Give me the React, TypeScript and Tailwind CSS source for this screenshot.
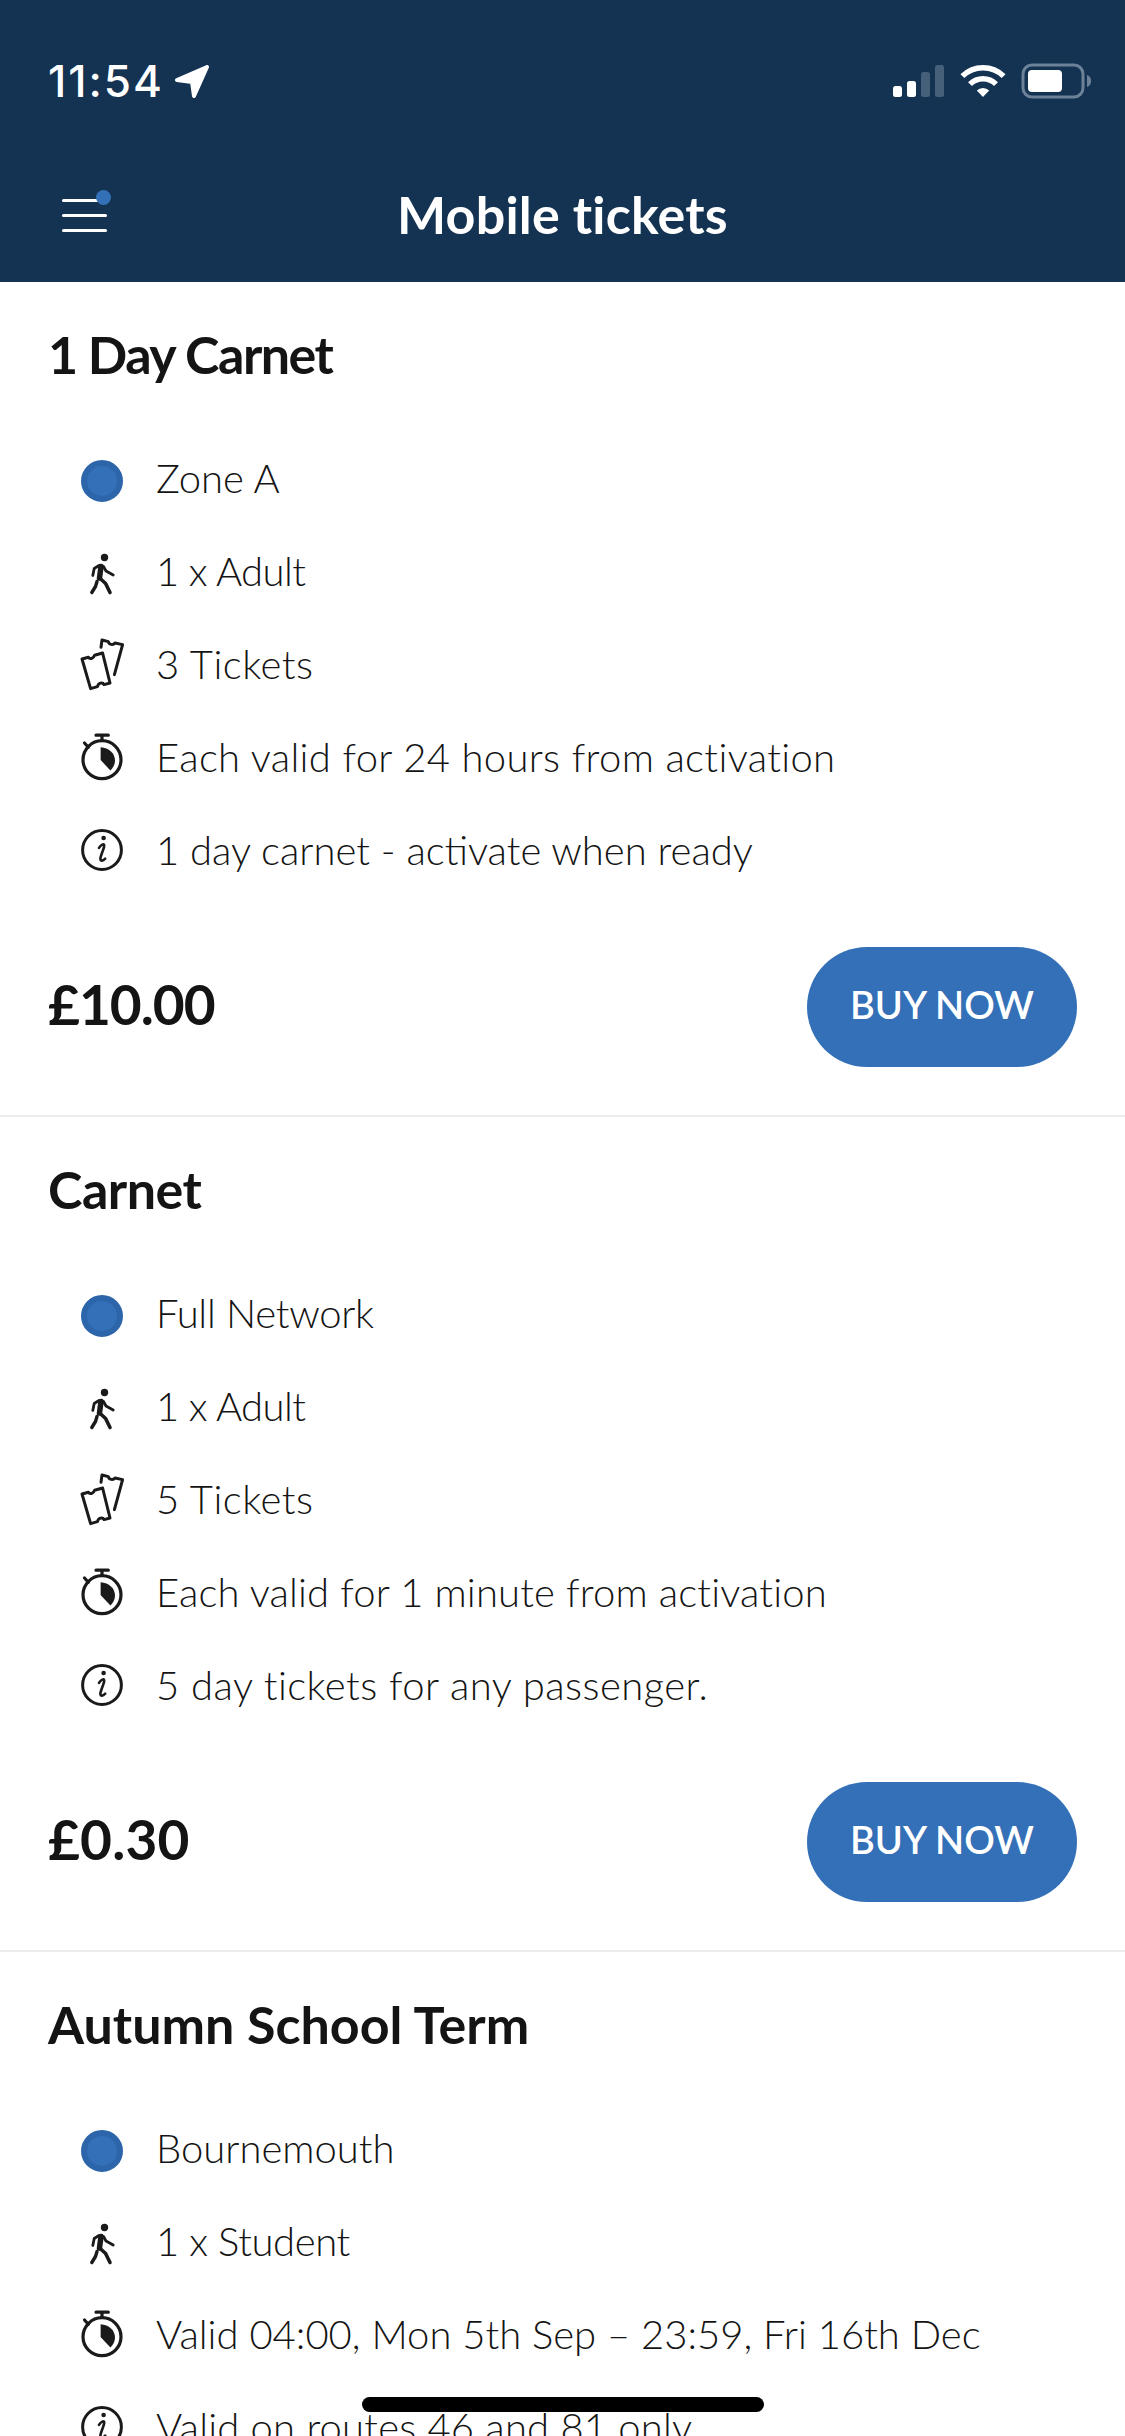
const font = { fontFamily: '"Lato", "Noto Sans", sans-serif' };

function Dot() {
  return <span className="block h-[42px] w-[42px] rounded-full border-[6px] border-[#2c65aa] bg-[#3370b7] translate-y-[3px]" />;
}

function Walker() {
  return (
    <svg viewBox="0 0 42 42" className="h-[42px] w-[42px] overflow-visible translate-y-[3px]" fill="none" stroke="#1a1a1a" strokeLinecap="round" strokeLinejoin="round">
      <circle cx="23.5" cy="4.5" r="3.7" fill="#1a1a1a" stroke="none" />
      <path d="M20 13.5 18.5 25" strokeWidth="5.5" />
      <path d="M18 12.5 13.2 15.5 11.8 22.5" strokeWidth="2.8" />
      <path d="M22.5 13.5 25 18 32.2 22" strokeWidth="2.8" />
      <path d="M18.6 25 24.6 30.5 29 39.5" strokeWidth="3.6" />
      <path d="M16 28.5 14.5 33.5 10.8 39.5" strokeWidth="3.4" />
    </svg>
  );
}

function Tickets() {
  return (
    <svg viewBox="0 0 42 42" className="h-[42px] w-[42px] overflow-visible" fill="none" stroke="#1a1a1a" strokeWidth="3" strokeLinejoin="round" strokeLinecap="round">
      <path d="M1 16 7.4 14.2C8.6 16.6 12.6 15.8 13.6 12.2L21.6 10 29 40 23 41.6C21.6 38.8 17.4 39.8 16.4 43.6L9.6 45.6Z" />
      <path d="M20 4.2 21 -3 27.4 -1.4C27.8 1.6 32 2.6 34 0L41.6 1.6 33.4 31.6" />
    </svg>
  );
}

function Timer() {
  return (
    <svg viewBox="0 0 42 42" className="h-[42px] w-[42px] overflow-visible translate-y-[1px]" fill="none" stroke="#1a1a1a" strokeWidth="3.2" strokeLinecap="round">
      <circle cx="21" cy="22.7" r="19" />
      <path d="M15 -1.8H27.3M21 -1.8V3M3.5 6 7.3 10.2" />
      <path d="M19.6 10.2C28 10.8 34 16.4 34 23.4 34 27 32.4 30.6 29.4 33.4L19.6 23Z" fill="#1a1a1a" stroke="none" />
    </svg>
  );
}

function Info() {
  return (
    <svg viewBox="0 0 42 42" className="h-[42px] w-[42px] overflow-visible" fill="none" stroke="#1a1a1a" strokeWidth="3" strokeLinecap="round">
      <circle cx="21" cy="21" r="19.4" />
      <circle cx="22.6" cy="9" r="2.3" fill="#1a1a1a" stroke="none" />
      <path d="M18 18.8C19.8 15.8 23.4 14 23.2 16.8 23 19.8 19.6 26.4 19.4 29.6 19.2 32.6 22 32 24.2 29.6" strokeWidth="2.6" />
    </svg>
  );
}

type Row = { icon: React.ReactNode; text: string; track?: string };

function Ticket({ title, titleTrack, rows, price, priceTrack }: { title: string; titleTrack: string; rows: Row[]; price?: string; priceTrack?: string }) {
  return (
    <section className="border-b-2 border-[#ececec] px-12 text-[#141414]" style={font}>
      <h2 className={`h-[150px] pt-[42px] text-[52px] leading-[60px] font-bold ${titleTrack}`}>{title}</h2>
      <ul className="flex flex-col pl-[33px] mt-[-1px]">
        {rows.map((r) => (
          <li key={r.text} className="flex h-[93px] items-center gap-[33px]">
            <span className="flex h-[42px] w-[42px] shrink-0 items-center justify-center">{r.icon}</span>
            <span className={`text-[40px] font-light whitespace-nowrap ${r.track ?? ""}`}>{r.text}</span>
          </li>
        ))}
      </ul>
      {price && (
        <div className="mt-[51px] flex items-center justify-between pb-[48px]">
          <span className={`pb-[6px] text-[55px] font-bold ${priceTrack}`}>{price}</span>
          <button className="flex h-[120px] w-[270px] items-center justify-center rounded-full bg-[#3370b7] pb-[6px] text-[38px] font-semibold text-white">BUY NOW</button>
        </div>
      )}
    </section>
  );
}

export default function App() {
  return (
    <div className="relative h-[2436px] w-[1125px] overflow-hidden bg-white">
      <header className="flex h-[282px] flex-col bg-[#143252] text-white">
        <div className="flex h-[162px] items-center justify-between pl-12 pr-[34px]">
          <div className="flex items-center gap-[11px]">
            <span className="text-[44px] font-medium leading-none tracking-[2px]" style={{ fontFamily: '"Inter", sans-serif' }}>11:54</span>
            <svg width="34" height="33" viewBox="0 0 34 33" fill="#fff" stroke="#fff" strokeWidth="4" strokeLinejoin="round">
              <path d="M2 15 32 2 19 31 17 17Z" />
            </svg>
          </div>
          <div className="flex items-center">
            <svg width="198" height="36" viewBox="893 64 198 36" className="block">
              <rect x="893" y="87" width="9" height="11" rx="2.5" fill="#fff" />
              <rect x="907" y="82" width="9" height="16" rx="2.5" fill="#fff" />
              <rect x="921" y="73" width="9" height="25" rx="2.5" fill="#47607a" />
              <rect x="935" y="66" width="9" height="32" rx="2.5" fill="#47607a" />
              <g transform="translate(960 65)" fill="none" stroke="#fff" strokeWidth="5.5">
                <path d="M2.4 12.1A29.5 29.5 0 0 1 43.6 12.1" />
                <path d="M10 20.1A18.5 18.5 0 0 1 36 20.1" />
                <path d="M23 33 16.8 26.6A8.8 8.8 0 0 1 29.2 26.6Z" fill="#fff" stroke="none" />
              </g>
              <rect x="1023" y="66" width="60" height="32" rx="9" fill="none" stroke="#6c8299" strokeWidth="3" />
              <rect x="1028" y="71" width="34" height="22" rx="4" fill="#fff" />
              <path d="M1087 76C1090 77 1091 79 1091 82 1091 85 1090 87 1087 88Z" fill="#6c8299" />
            </svg>
          </div>
        </div>
        <nav className="grid h-[106px] grid-cols-[1fr_auto_1fr] items-center">
          <div className="pl-[62px]">
            <div className="relative flex w-[45px] flex-col gap-[12px]">
              <span className="h-[3px] rounded-full bg-white" />
              <span className="h-[3px] rounded-full bg-white" />
              <span className="h-[3px] rounded-full bg-white" />
              <span className="absolute right-[-4px] top-[-9px] h-[15px] w-[15px] rounded-full bg-[#3370b7]" />
            </div>
          </div>
          <h1 className="pb-[3px] text-[52px] font-bold tracking-[0.2px]" style={font}>Mobile tickets</h1>
          <div />
        </nav>
      </header>
      <main>
        <Ticket
          title="1 Day Carnet"
          titleTrack="tracking-[-1.5px]"
          price="£10.00"
          priceTrack="tracking-[-1px]"
          rows={[
            { icon: <Dot />, text: "Zone A" },
            { icon: <Walker />, text: "1 x Adult", track: "tracking-[-0.6px]" },
            { icon: <Tickets />, text: "3 Tickets", track: "tracking-[0.5px]" },
            { icon: <Timer />, text: "Each valid for 24 hours from activation", track: "tracking-[0.35px]" },
            { icon: <Info />, text: "1 day carnet - activate when ready" },
          ]}
        />
        <Ticket
          title="Carnet"
          titleTrack="tracking-[-0.5px]"
          price="£0.30"
          priceTrack="tracking-[0.2px]"
          rows={[
            { icon: <Dot />, text: "Full Network", track: "tracking-[-0.3px]" },
            { icon: <Walker />, text: "1 x Adult", track: "tracking-[-0.6px]" },
            { icon: <Tickets />, text: "5 Tickets", track: "tracking-[0.5px]" },
            { icon: <Timer />, text: "Each valid for 1 minute from activation", track: "tracking-[0.15px]" },
            { icon: <Info />, text: "5 day tickets for any passenger.", track: "tracking-[0.45px]" },
          ]}
        />
        <Ticket
          title="Autumn School Term"
          titleTrack="tracking-[0px]"
          rows={[
            { icon: <Dot />, text: "Bournemouth" },
            { icon: <Walker />, text: "1 x Student", track: "tracking-[-0.4px]" },
            { icon: <Timer />, text: "Valid 04:00, Mon 5th Sep – 23:59, Fri 16th Dec" },
            { icon: <Info />, text: "Valid on routes 46 and 81 only", track: "tracking-[0.2px]" },
          ]}
        />
      </main>
      <div className="absolute left-[362px] top-[2397px] h-[15px] w-[402px] rounded-full bg-black" />
    </div>
  );
}
